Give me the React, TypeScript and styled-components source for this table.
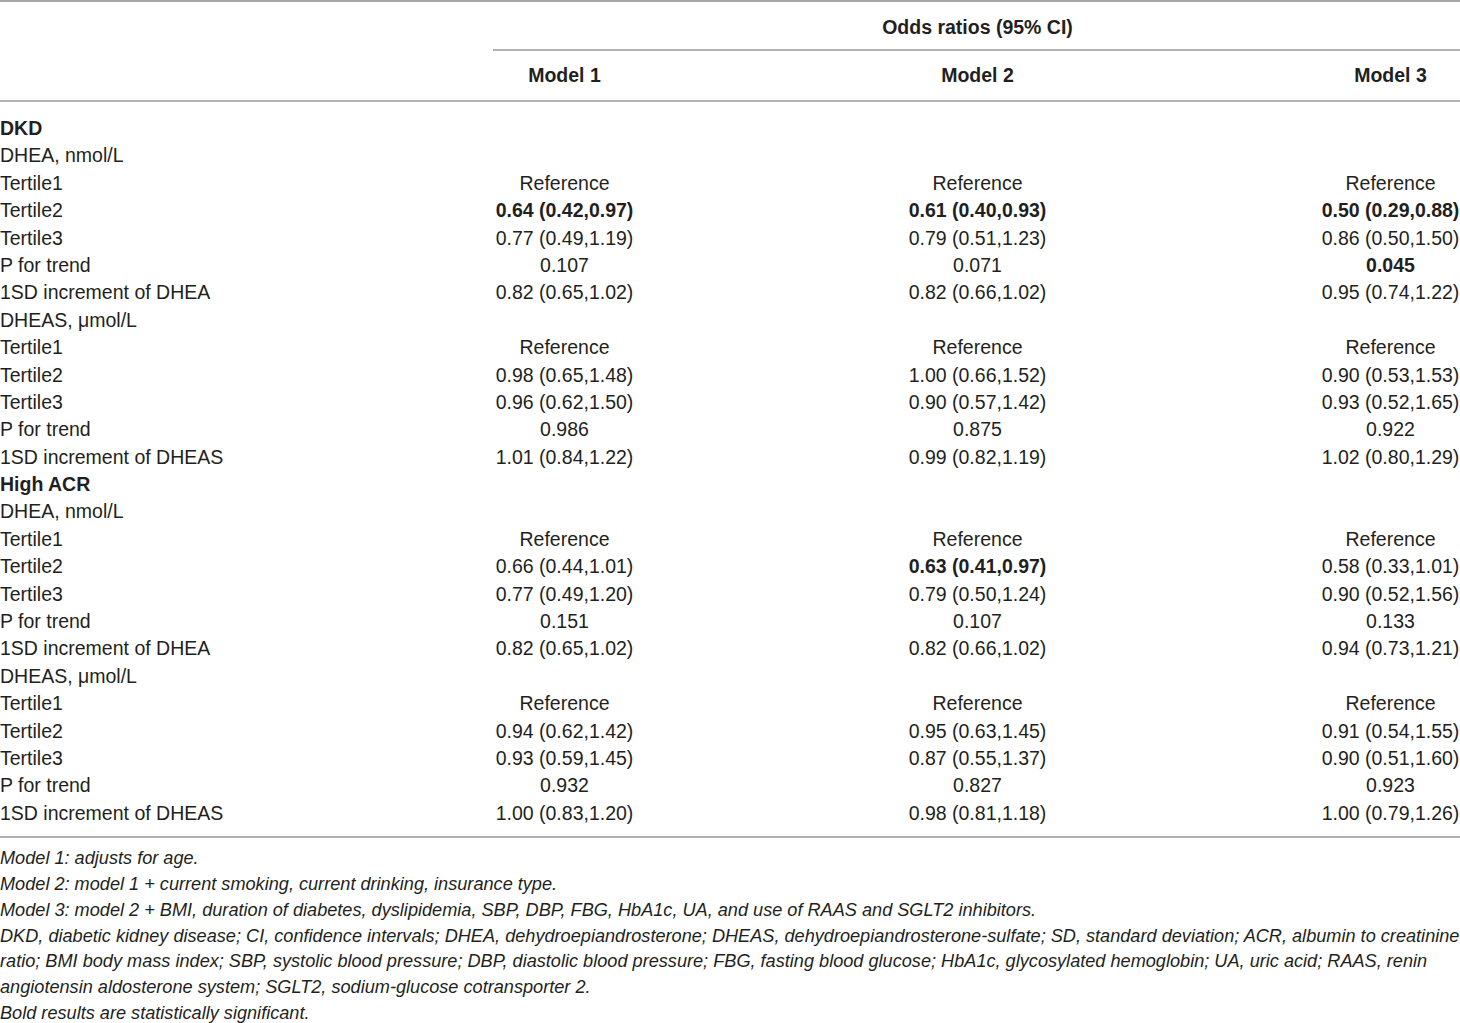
import React from "react"

import styled, { createGlobalStyle } from "styled-components"

type Cell = string | { v: string; b: true }

type Row = { label: string; kind?: "section"; cells?: Cell[] }

const B = (v: string): Cell => ({ v, b: true })

const REF: Cell[] = ["Reference", "Reference", "Reference"]

const rows: Row[] = [
  { label: "DKD", kind: "section" },
  { label: "DHEA, nmol/L" },
  { label: "Tertile1", cells: REF },
  { label: "Tertile2", cells: [B("0.64 (0.42,0.97)"), B("0.61 (0.40,0.93)"), B("0.50 (0.29,0.88)")] },
  { label: "Tertile3", cells: ["0.77 (0.49,1.19)", "0.79 (0.51,1.23)", "0.86 (0.50,1.50)"] },
  { label: "P for trend", cells: ["0.107", "0.071", B("0.045")] },
  { label: "1SD increment of DHEA", cells: ["0.82 (0.65,1.02)", "0.82 (0.66,1.02)", "0.95 (0.74,1.22)"] },
  { label: "DHEAS, \u03bcmol/L" },
  { label: "Tertile1", cells: REF },
  { label: "Tertile2", cells: ["0.98 (0.65,1.48)", "1.00 (0.66,1.52)", "0.90 (0.53,1.53)"] },
  { label: "Tertile3", cells: ["0.96 (0.62,1.50)", "0.90 (0.57,1.42)", "0.93 (0.52,1.65)"] },
  { label: "P for trend", cells: ["0.986", "0.875", "0.922"] },
  { label: "1SD increment of DHEAS", cells: ["1.01 (0.84,1.22)", "0.99 (0.82,1.19)", "1.02 (0.80,1.29)"] },
  { label: "High ACR", kind: "section" },
  { label: "DHEA, nmol/L" },
  { label: "Tertile1", cells: REF },
  { label: "Tertile2", cells: ["0.66 (0.44,1.01)", B("0.63 (0.41,0.97)"), "0.58 (0.33,1.01)"] },
  { label: "Tertile3", cells: ["0.77 (0.49,1.20)", "0.79 (0.50,1.24)", "0.90 (0.52,1.56)"] },
  { label: "P for trend", cells: ["0.151", "0.107", "0.133"] },
  { label: "1SD increment of DHEA", cells: ["0.82 (0.65,1.02)", "0.82 (0.66,1.02)", "0.94 (0.73,1.21)"] },
  { label: "DHEAS, \u03bcmol/L" },
  { label: "Tertile1", cells: REF },
  { label: "Tertile2", cells: ["0.94 (0.62,1.42)", "0.95 (0.63,1.45)", "0.91 (0.54,1.55)"] },
  { label: "Tertile3", cells: ["0.93 (0.59,1.45)", "0.87 (0.55,1.37)", "0.90 (0.51,1.60)"] },
  { label: "P for trend", cells: ["0.932", "0.827", "0.923"] },
  { label: "1SD increment of DHEAS", cells: ["1.00 (0.83,1.20)", "0.98 (0.81,1.18)", "1.00 (0.79,1.26)"] },
]

const notes = [
  "Model 1: adjusts for age.",
  "Model 2: model 1 + current smoking, current drinking, insurance type.",
  "Model 3: model 2 + BMI, duration of diabetes, dyslipidemia, SBP, DBP, FBG, HbA1c, UA, and use of RAAS and SGLT2 inhibitors.",
  "DKD, diabetic kidney disease; CI, confidence intervals; DHEA, dehydroepiandrosterone; DHEAS, dehydroepiandrosterone-sulfate; SD, standard deviation; ACR, albumin to creatinine",
  "ratio; BMI body mass index; SBP, systolic blood pressure; DBP, diastolic blood pressure; FBG, fasting blood glucose; HbA1c, glycosylated hemoglobin; UA, uric acid; RAAS, renin",
  "angiotensin aldosterone system; SGLT2, sodium-glucose cotransporter 2.",
  "Bold results are statistically significant.",
]

export default function App() {
  return (
    <>
      <GlobalStyle />
      <Page>
        <Table>
          <HeadRow>
            <span />
            <SpanHead>
              <SpanLabel>Odds ratios (95% CI)</SpanLabel>
            </SpanHead>
          </HeadRow>
          <HeadRow $ruled>
            <span />
            <HeadCell>Model 1</HeadCell>
            <HeadCell>Model 2</HeadCell>
            <HeadCell>Model 3</HeadCell>
          </HeadRow>
          <Body>
            {rows.map((row, i) => (
              <BodyRow key={i}>
                <Label $bold={row.kind === "section"}>{row.label}</Label>
                {(row.cells || ["", "", ""]).map((c, j) =>
                  typeof c === "string" ? (
                    <Value key={j}>{c}</Value>
                  ) : (
                    <Value key={j} $bold>
                      {c.v}
                    </Value>
                  )
                )}
              </BodyRow>
            ))}
          </Body>
        </Table>
        <Notes>
          {notes.map((n) => (
            <Note key={n}>{n}</Note>
          ))}
        </Notes>
      </Page>
    </>
  )
}

const GlobalStyle = createGlobalStyle`
  html, body {
    margin: 0;
    padding: 0;
    background: #ffffff;
    overflow: hidden;
  }
  body {
    font-family: "Liberation Sans", Arial, sans-serif;
    color: #231f20;
  }
`

const Page = styled.div`
  width: 1460px;
  height: 1023px;
  overflow: hidden;
`

const Table = styled.div`
  width: 1597px;
  border-top: 2px solid #a6a6a6;
  border-bottom: 2px solid #b0b0b0;
`

const columns = `358px 413px 413px 413px`

const HeadRow = styled.div<{ $ruled?: boolean }>`
  display: grid;
  grid-template-columns: ${columns};
  height: 49px;
  align-items: center;
  border-bottom: ${(p) => (p.$ruled ? "2px solid #b3b3b3" : "none")};
  font-size: 19.5px;
  font-weight: 700;
`

const SpanHead = styled.div`
  grid-column: 2 / span 3;
  height: 100%;
  display: flex;
  align-items: center;
  justify-content: center;
  margin-left: 135px;
  padding: 3px 135px 0 0;
  border-bottom: 2px solid #b3b3b3;
  box-sizing: border-box;
`

const SpanLabel = styled.span`
  white-space: nowrap;
`

const HeadCell = styled.div`
  text-align: center;
`

const Body = styled.div`
  padding: 13px 0 9px;
`

const BodyRow = styled.div`
  display: grid;
  grid-template-columns: ${columns};
  height: 27.4px;
  align-items: center;
  font-size: 19.5px;
  line-height: 27.4px;
`

const Label = styled.div<{ $bold?: boolean }>`
  font-weight: ${(p) => (p.$bold ? 700 : 400)};
  white-space: nowrap;
`

const Value = styled.div<{ $bold?: boolean }>`
  text-align: center;
  white-space: nowrap;
  font-weight: ${(p) => (p.$bold ? 700 : 400)};
`

const Notes = styled.div`
  padding-top: 8px;
  font-size: 18.15px;
  font-style: italic;
  line-height: 25.8px;
`

const Note = styled.div`
  white-space: nowrap;
`
